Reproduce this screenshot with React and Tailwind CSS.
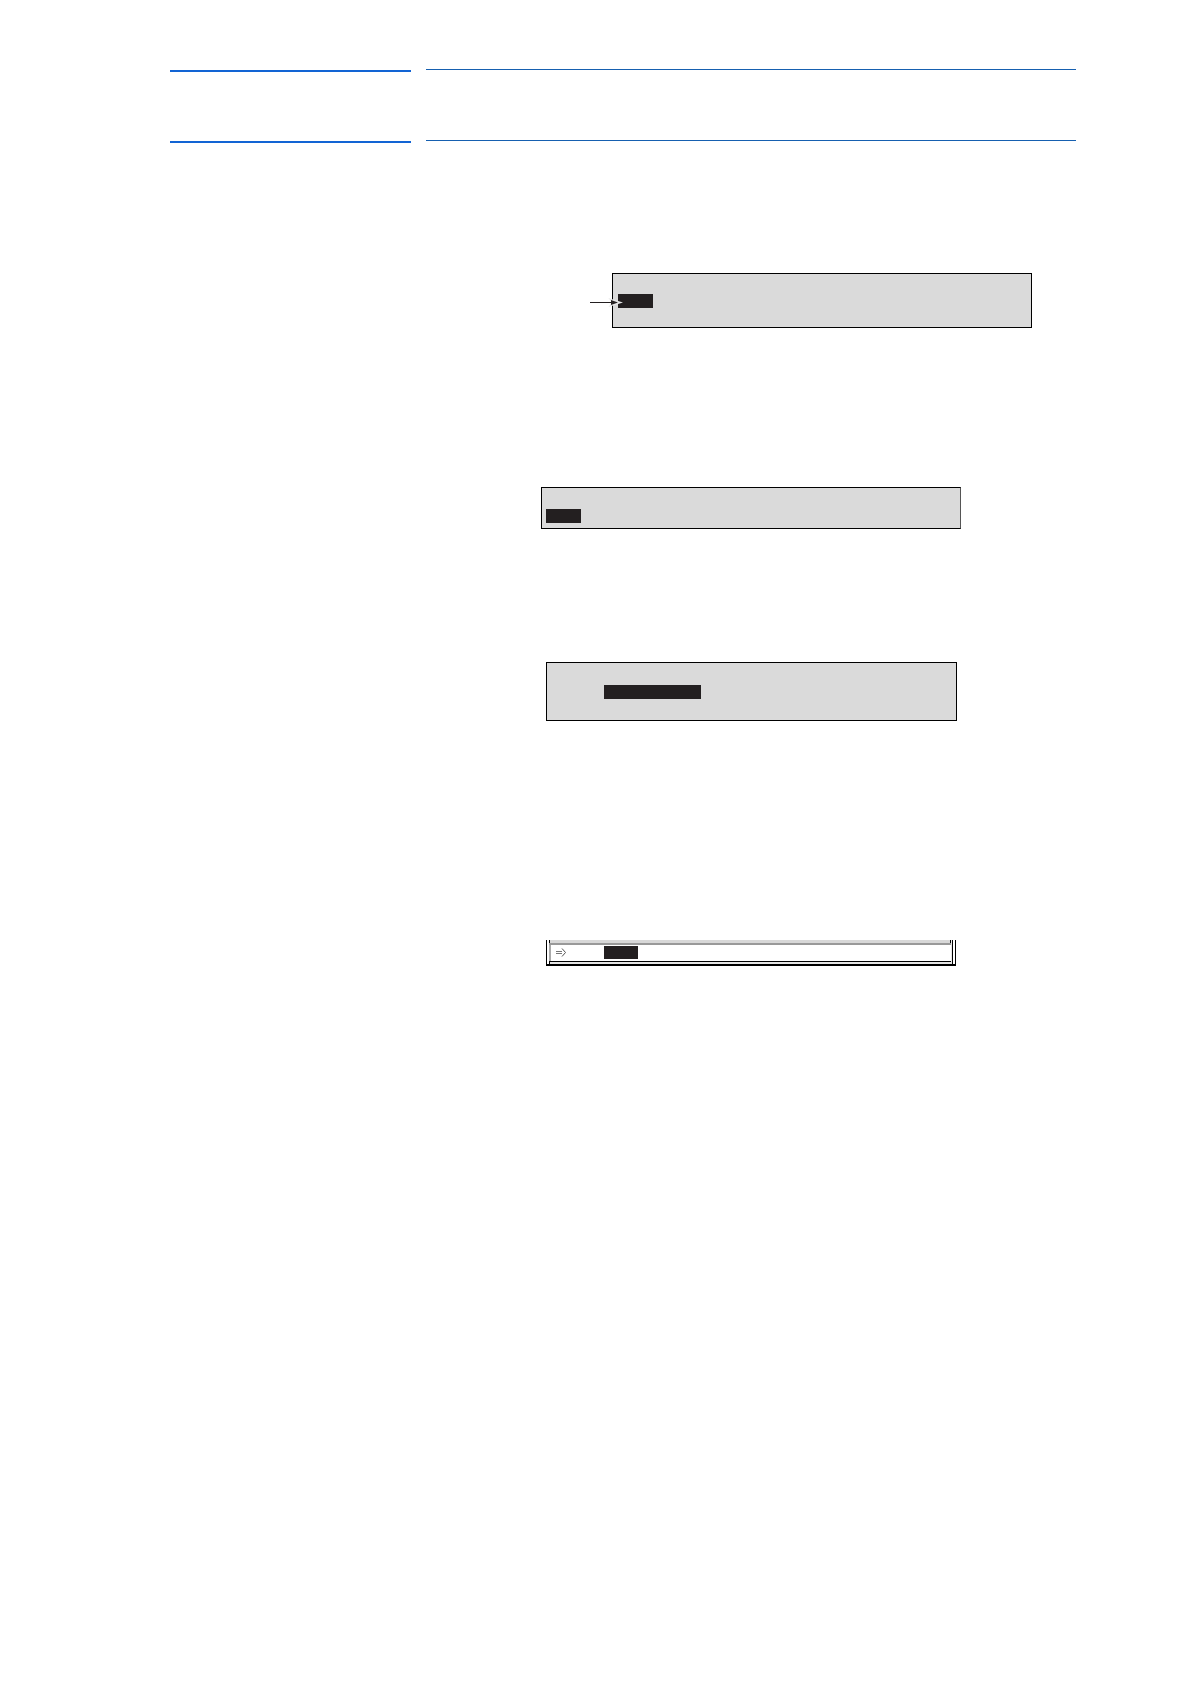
function HeaderRule() {
  return (
    <div className="flex items-start gap-[15px]">
      <div className="mt-px h-0.5 w-[241px] shrink-0 bg-[#1264d4]" />
      <div className="h-px flex-1 bg-[#1660b0]" />
    </div>
  );
}

function PointerArrow() {
  return (
    <svg
      className="absolute top-[23px] -left-[23px]"
      width="33"
      height="11"
      viewBox="0 0 33 11"
      aria-hidden="true"
    >
      <path d="M20.5 2.5 L30.5 5.5 L20.5 8.5 L23 5.5 Z" fill="#e8e8e8" stroke="#e8e8e8" strokeWidth="1.5" />
      <path d="M0 5.5 H23" stroke="#231f20" strokeWidth="1" />
      <path d="M21 3 L28 5.5 L21 8 Z" fill="#231f20" />
    </svg>
  );
}

function DoubleArrow() {
  return (
    <svg className="mt-[3px] ml-[5px] shrink-0" width="10" height="9" viewBox="0 0 10 9" aria-hidden="true">
      <path d="M0 3.5 H6 M0 5.5 H6" stroke="#777777" strokeWidth="1" />
      <path d="M6 0.5 L9.5 4.5 L6 8.5" fill="none" stroke="#555555" strokeWidth="1" />
    </svg>
  );
}

function StatusRow() {
  return (
    <div className="ml-[376px] flex h-[26px] w-[410px] max-w-full border-x border-b-2 border-black px-0.5">
      <div className="flex flex-1 flex-col">
        <div className="h-[3px] border-x border-black bg-[#d8d8d8]" />
        <div className="h-0.5 bg-[#999999]" />
        <div className="flex h-4 items-start border-l-2 border-[#aaaaaa] bg-white">
          <DoubleArrow />
          <div className="mt-px ml-[38px] h-[13px] w-[34px] bg-[#231f20]" />
        </div>
        <div className="h-px bg-black" />
        <div className="flex-1 border-l border-black bg-[#e4e4e4]" />
      </div>
      <div className="w-px bg-[#e8e8e8]" />
      <div className="w-px bg-black" />
    </div>
  );
}

export default function App() {
  return (
    <main className="min-h-screen bg-white pt-[69px] pr-[114px] pl-[170px]">
      <header className="flex flex-col gap-[68px]">
        <HeaderRule />
        <HeaderRule />
      </header>

      {/* Display panels */}
      <div className="relative mt-[130px] ml-[442px] h-[55px] w-[420px] border border-black bg-[#dadada] pt-5 pl-[5px]">
        <div className="h-3.5 w-[35px] bg-[#231f20]" />
        <PointerArrow />
      </div>

      <div className="mt-[159px] ml-[371px] h-[42px] w-[420px] border border-black border-r-[#555555] bg-[#dadada] pt-[21px] pl-1">
        <div className="h-3.5 w-[35px] bg-[#231f20]" />
      </div>

      <div className="mt-[133px] mb-[219px] ml-[376px] h-[59px] w-[411px] border border-black bg-[#dadada] pt-[22px] pl-[57px]">
        <div className="h-3.5 w-[97px] bg-[#231f20]" />
      </div>

      <StatusRow />
    </main>
  );
}
